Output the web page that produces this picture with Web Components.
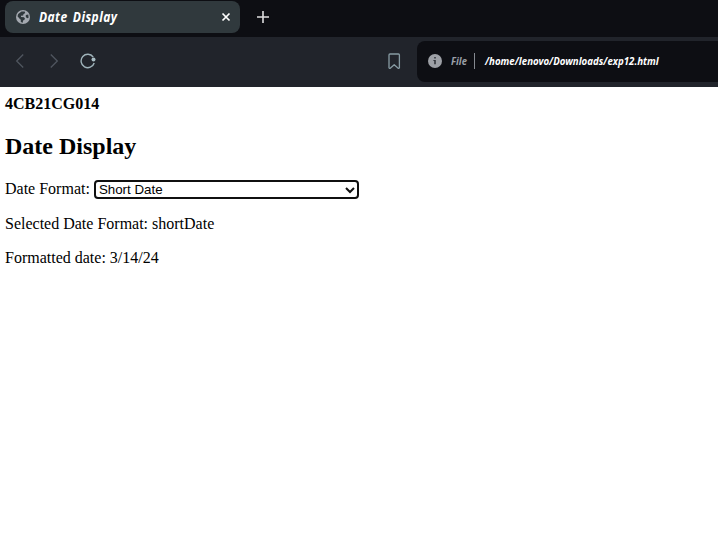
<!DOCTYPE html>
<html lang="en">
<head>
<meta charset="utf-8">
<title>Date Display</title>
<style>
html,body{margin:0;height:100%;background:#fff;overflow:hidden}
</style>
</head>
<body>
<browser-window>
  <browser-tab slot="tabs">Date Display</browser-tab>
  <address-bar slot="address" scheme="File">/home/lenovo/Downloads/exp12.html</address-bar>
  <date-page></date-page>
</browser-window>
<script>
const define = (name, html) => customElements.define(name, class extends HTMLElement {
  constructor() {
    super();
    const t = document.createElement('template');
    t.innerHTML = html;
    this.attachShadow({mode: 'open'}).append(t.content.cloneNode(true));
    const scheme = this.shadowRoot.querySelector('.scheme b');
    if (scheme) scheme.textContent = this.getAttribute('scheme');
  }
});

define('browser-tab', `
<style>
:host{display:flex;box-sizing:border-box;width:235px;height:32px;border-radius:8px;background:#30393d;align-items:center;padding:0 9px 0 11px;color:#fff}
svg{display:block;flex:none}
.label{width:187px;margin-left:9px;font:italic 700 14px/20px "Noto Sans",sans-serif;white-space:nowrap}
.label b{display:inline-block;font-weight:700;letter-spacing:.5px;word-spacing:2px;transform:scaleX(.858);transform-origin:0 50%}
</style>
<svg width="14" height="14" viewBox="0 0 14 14"><circle cx="7" cy="7" r="7" fill="#a4a9b0"/><path d="M5.5 1.6 8.7 1.5 9.2 3 7.4 4.2 7.2 5.5 5 5.8 5 7 8 7.3 9 8.7 8.2 10 7 10.4 6.8 12.7 4.8 12 4.8 9.8 3.4 8.4 1.5 6.3 2.2 4.1ZM9.8 5 12.3 4.6 12.6 7.7 11.2 8.2 9.8 7Z" fill="#30393d"/></svg>
<span class="label"><b><slot></slot></b></span>
<svg width="10" height="10" viewBox="0 0 10 10"><path d="M1.5 1.5 8.5 8.5M8.5 1.5 1.5 8.5" stroke="#fff" stroke-width="1.7"/></svg>
`);

define('address-bar', `
<style>
:host{display:flex;box-sizing:border-box;width:301px;height:41px;border-radius:8px 0 0 8px;background:#0d0e13;align-items:center;padding:0 0 1px 11px;color:#fff;font:italic 600 11px/16px "Noto Sans",sans-serif;white-space:nowrap}
svg{display:block;flex:none}
b{display:inline-block;font-weight:700;transform-origin:0 50%}
.scheme{color:#9a9fa7;width:23px;margin-left:9px}
.scheme b{transform:scaleX(.86)}
i{width:1px;height:16px;background:#858990;margin-right:10px}
.path b{transform:scaleX(.88)}
</style>
<svg width="14" height="14" viewBox="0 0 14 14"><circle cx="7" cy="7" r="7" fill="#9da0a6"/><path d="M6.2 3h1.6v1.6H6.2zM5.4 6h2.4v4.2H6.2V7H5.4z" fill="#33363c"/></svg>
<span class="scheme"><b></b></span><i></i><span class="path"><b><slot></slot></b></span>
`);

define('browser-window', `
<style>
:host{display:flex;flex-direction:column;height:100%}
.tabs{display:flex;align-items:center;height:37px;box-sizing:border-box;padding:0 0 3px 5px;background:#0d0e13;flex:none}
.bar{display:flex;align-items:center;height:50px;box-sizing:border-box;background:#21242b;padding:0 0 1px 12px;flex:none}
svg{display:block;flex:none;fill:none}
.plus{margin-left:16px}
.nav{display:flex;gap:18px;width:372px;padding-bottom:2px}
.mark{margin:0 14px 2px 1px}
</style>
<div class="tabs"><slot name="tabs"></slot>
<svg class="plus" width="14" height="14" viewBox="0 0 14 14"><path d="M7 1v12M1 7h12" stroke="#dededf" stroke-width="1.6"/></svg></div>
<div class="bar">
<div class="nav">
<svg width="16" height="16" viewBox="0 0 16 16"><path d="M11.2 1.5 4.7 8l6.5 6.5" stroke="#50565f" stroke-width="1.3"/></svg>
<svg width="16" height="16" viewBox="0 0 16 16"><path d="M4.8 1.5 11.3 8l-6.5 6.5" stroke="#50565f" stroke-width="1.3"/></svg>
<svg width="16" height="16" viewBox="0 0 16 16"><path d="M13.2 4A6.7 6.7 0 1 0 14.2 10" stroke="#9fb3ba" stroke-width="1.4"/><circle cx="13.5" cy="6.6" r="2" fill="#a9bdc4"/></svg>
</div>
<svg class="mark" width="18" height="18" viewBox="0 0 18 18"><path d="M5 2h8.4q1 0 1 1v12.7q-.6 1.1-1.5.3L9.2 12.7 5.5 16q-.9.8-1.5-.3V3q0-1 1-1Z" stroke="#879ba3" stroke-width="1.3" stroke-linejoin="round"/></svg>
<slot name="address"></slot>
</div>
<slot></slot>
`);

define('format-select', `
<style>
:host{display:inline-flex;box-sizing:border-box;width:265px;height:19px;border:2px solid #101010;border-radius:4px;background:#fff;align-items:center;padding:0 2px 0 3px;justify-content:space-between;vertical-align:top;font:13.333px/15px "Liberation Sans",Arial,sans-serif;color:#000}
svg{display:block;fill:none}
</style>
<span><slot></slot></span>
<svg width="10" height="8" viewBox="0 0 10 8"><path d="M1 2l4 4 4-4" stroke="#101010" stroke-width="2"/></svg>
`);

define('date-page', `
<style>
:host{display:block;padding:8px 5px;font:16px/normal "Liberation Serif","Times New Roman",serif;color:#000}
h2{font-size:24px;margin:20px 0;line-height:27px}
p{margin:16px 0;line-height:18px}
.id{line-height:18px}
.row{height:19px;line-height:18px}
</style>
<div class="id"><b>4CB21CG014</b></div>
<h2>Date Display</h2>
<div class="row">Date Format: <format-select>Short Date</format-select></div>
<p>Selected Date Format: shortDate</p>
<p>Formatted date: 3/14/24</p>
`);
</script>
</body>
</html>
